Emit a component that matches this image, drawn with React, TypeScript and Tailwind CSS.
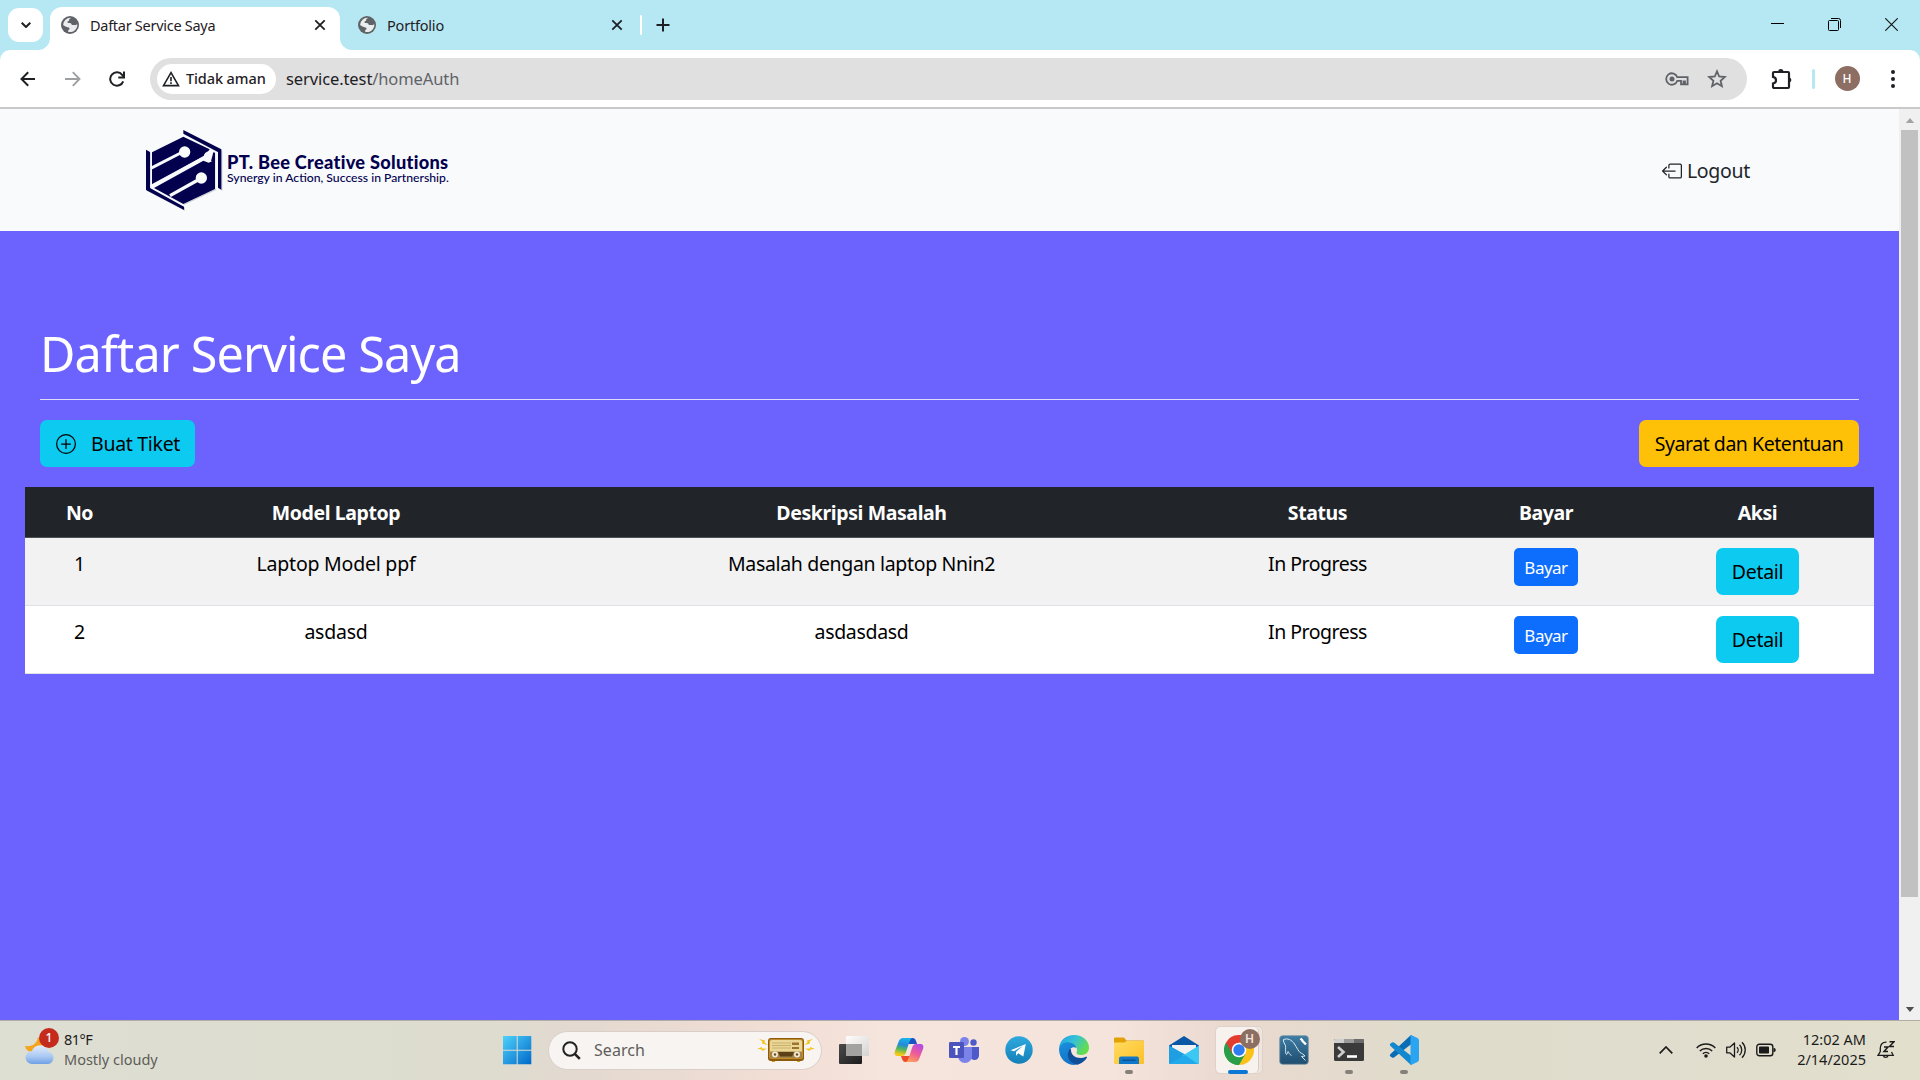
import React from "react";

const Globe = () => (
  <svg viewBox="0 0 18 18" className="h-[18px] w-[18px] shrink-0">
    <circle cx="9" cy="9" r="9" fill="#5f6368" />
    <path d="M10.2 1.9c-1 .5-2.3 1.1-2.1 2 .2.9-.6 1.300-1.500 1.500-.5.9.2 1.600 1.300 1.600 1.300 0 2.300.2 2.600 1.200.3.900 1 1 1.900.8.9-.2 1.700-.2 2.500.3.600-.9 1.200-1.600 1.400-.8a7.200 7.200 0 0 1-9.200 7.300c-.1-.8.100-1.700 1-2.200.8-.5.500-1.700-.4-2-1.500-.4-3.500-.9-5.600-2.500A7.200 7.200 0 0 1 10.200 1.900z" fill="#fff" fillOpacity=".88" />
  </svg>
);

const TabClose = () => (
  <svg viewBox="0 0 12 12" className="h-3 w-3 shrink-0" stroke="#1f2024" strokeWidth="1.800" fill="none">
    <path d="M1.300 1.300l9.400 9.400M10.700 1.300l-9.400 9.400" />
  </svg>
);

function TabStrip() {
  return (
    <div className="flex h-[50px] items-start bg-[#b5e8f3]">
      <div className="ml-2 mt-2 flex h-[34px] w-[35px] items-center justify-center rounded-[11px] bg-white">
        <svg viewBox="0 0 10 6" className="h-[6px] w-[10px]" fill="none" stroke="#1f2024" strokeWidth="2">
          <path d="M.7.700L5 5 9.300.700" />
        </svg>
      </div>
      <div className="mt-[7px] flex h-[43px] items-end">
        <svg viewBox="0 0 12 12" className="ml-[-5px] h-3 w-3" fill="#fff">
          <path d="M12 0v12H0A12 12 0 0 0 12 0z" />
        </svg>
        <div className="flex h-full w-[290px] items-center rounded-t-[12px] bg-white pb-[7px] pl-[11px] pr-[14px]">
          <Globe />
          <span className="ml-[11px] flex-1 text-[14.5px] leading-5 tracking-[-0.28px] text-[#1f2024]">Daftar Service Saya</span>
          <TabClose />
        </div>
        <svg viewBox="0 0 12 12" className="h-3 w-3" fill="#fff">
          <path d="M0 0v12h12A12 12 0 0 1 0 0z" />
        </svg>
      </div>
      <div className="mt-[7px] flex h-[36px] w-[288px] items-center pl-[6px] pr-[17px]">
        <Globe />
        <span className="ml-[11px] flex-1 text-[14.5px] leading-5 tracking-[-0.2px] text-[#1f2024]">Portfolio</span>
        <TabClose />
      </div>
      <div className="mt-[15px] h-[20px] w-[2px] rounded bg-white" />
      <svg viewBox="0 0 14 14" className="ml-[14px] mt-[18px] h-[14px] w-[14px]" stroke="#1f2024" strokeWidth="2">
        <path d="M7 .5v13M.5 7h13" />
      </svg>
      <div className="ml-auto mr-[22px] mt-[18px] flex h-[13px] w-[127px] items-center justify-between">
        <svg viewBox="0 0 13 13" className="h-[13px] w-[13px]"><path d="M0 5.500h13" stroke="#000" /></svg>
        <svg viewBox="0 0 13 13" className="mr-px h-[13px] w-[13px]" fill="none" stroke="#000">
          <rect x=".5" y="2.500" width="10" height="10" rx="1" />
          <path d="M3 .5h7.500a2 2 0 0 1 2 2v7.500" />
        </svg>
        <svg viewBox="0 0 13 13" className="h-[13px] w-[13px]" stroke="#111" strokeWidth="1.100"><path d="M.3.300l12.400 12.400M12.700.300L.3 12.700" /></svg>
      </div>
    </div>
  );
}

function Toolbar() {
  return (
    <div className="bg-[#b5e8f3]">
      <div className="flex h-[57px] items-center rounded-t-[10px] bg-white pl-5">
        <svg viewBox="0 0 16 16" className="h-4 w-4" fill="none" stroke="#1f2024" strokeWidth="2"><path d="M15 8H2M8.200 1.200L1.500 8l6.700 6.800" /></svg>
        <svg viewBox="0 0 16 16" className="ml-[29px] h-4 w-4" fill="none" stroke="#9d9fa1" strokeWidth="1.900"><path d="M0 8h14M7.800 1.200L14.500 8l-6.700 6.800" /></svg>
        <svg viewBox="0 0 16 16" className="ml-[28px] h-4 w-4" fill="none" stroke="#1f2024" strokeWidth="2">
          <path d="M14.200 10.300A6.700 6.700 0 1 1 13.200 3.900L14.800 5.800" />
          <path d="M15 .5v6H9.300" />
        </svg>
        <div className="ml-[25px] flex h-[42px] w-[1597px] items-center rounded-full bg-[#e0e0e0] pl-[7px] pr-5">
          <div className="flex h-[30px] w-[119px] items-center rounded-full bg-white pl-[5px]">
            <svg viewBox="0 0 18 16" className="h-4 w-[18px]" fill="none" stroke="#1f2024" strokeWidth="1.600">
              <path d="M9 1.700L1.500 14.600h15z" />
              <path d="M9 6v4.200M9 11.200v1.800" />
            </svg>
            <span className="ml-[6px] whitespace-nowrap pb-[2px] text-[14.5px] font-medium leading-5 tracking-[-0.1px] text-[#1f2024]">Tidak aman</span>
          </div>
          <span className="ml-[10px] flex-1 pt-[1px] text-[16.5px] leading-6 tracking-[-0.1px] text-[#5f6368]"><span className="text-[#1f2024]">service.test</span>/homeAuth</span>
          <svg viewBox="0 0 24 14" className="h-[14px] w-6" fill="none" stroke="#5f6368" strokeWidth="1.800">
            <path d="M12.300 5.200A5.700 5.700 0 1 0 12.300 8.800H16V12.300H18.500V9.500H20V12.300H22.600V5.200z" />
            <circle cx="7" cy="7" r="2.500" fill="#5f6368" stroke="none" />
          </svg>
          <svg viewBox="0 0 20 20" className="ml-[18px] h-5 w-5" fill="none" stroke="#5f6368" strokeWidth="1.800">
            <path d="M10 2.300l2.200 5.200 5.600.5-4.200 3.700 1.300 5.500L10 14.300l-4.900 2.900 1.300-5.500L2.200 8l5.600-.5z" />
          </svg>
        </div>
        <svg viewBox="0 0 22 22" className="ml-6 h-[22px] w-[22px]" fill="none" stroke="#1f2024" strokeWidth="2.200">
          <path d="M2 5.200Q2 4 3.200 4H17Q18 4 18 5V19Q18 20 17 20H3.200Q2 20 2 18.800V15.500Q5 15 5 12.200T2 8.900z" />
          <path d="M7.200 3.500a2.600 2.600 0 0 1 5.200 0zM18.500 9.500a2.600 2.600 0 0 1 0 5z" fill="#1f2024" stroke="none" />
        </svg>
        <div className="ml-[19px] h-5 w-[2.5px] rounded bg-[#b5e8f3]" />
        <div className="ml-[20px] flex h-[25px] w-[25px] items-center justify-center rounded-full bg-[#8d6e63] text-[12px] font-medium text-white">H</div>
        <svg viewBox="0 0 4 18" className="ml-[31px] h-[18px] w-1" fill="#1f2024"><circle cx="2" cy="2" r="2" /><circle cx="2" cy="9" r="2" /><circle cx="2" cy="16" r="2" /></svg>
      </div>
    </div>
  );
}

function Logo() {
  return (
    <div className="flex items-center text-[#03004e]">
      <svg viewBox="42 28 240 246" className="h-[82px] w-20">
        <g fill="#c9cbd2" transform="translate(3 3)">
          <path d="M48 91l11 6v108l103 56v9L48 211zM160 32l114 58v120l-10-6V97L160 41z" />
          <path d="M160 51l95 47v110l-95 44-94-46V98z" />
        </g>
        <path d="M160 51l97 47v110l-97 46-96-46V98z" fill="#f8fafc" />
        <g fill="#03004e">
          <path d="M48 90l12 7v108l102 56v10L48 211zM160 31l114 58v121l-10-6V97L160 42z" />
          <path d="M160 51l79 38-12 17-161 91V98z" />
          <path d="M72 205L220 123l16 6 19-8v87l-95 45z" />
        </g>
        <g stroke="#f8fafc" fill="#f8fafc">
          <path d="M62 146L152 100" strokeWidth="9" />
          <circle cx="164" cy="97" r="17" stroke="none" />
          <path d="M62 201L232 109" strokeWidth="10" />
          <circle cx="237" cy="111" r="16" stroke="none" />
          <path d="M120 228L204 181" strokeWidth="10" />
          <circle cx="214" cy="175" r="17" stroke="none" />
        </g>
        <path d="M250 98l5 1v30l-12-4z" fill="#03004e" />
      </svg>
      <div className="ml-[3px] flex flex-col whitespace-nowrap font-['Lato',sans-serif]">
        <span className="text-[18.200px] font-black leading-[17px] tracking-[0.28px]">PT. Bee Creative Solutions</span>
        <span className="text-[12.200px] font-medium leading-[13px]">Synergy in Action, Success in Partnership.</span>
        <span className="h-[2px]" />
      </div>
    </div>
  );
}

function Nav() {
  return (
    <div className="flex h-[122px] items-center justify-between bg-[#f8fafc] pl-36 pr-[149px]">
      <Logo />
      <div className="flex items-center pt-[2px] text-[19.5px] leading-[30px] tracking-[-0.3px] text-[#212529]">
        <svg viewBox="0 0 16 16" className="mr-[5px] h-5 w-5" fill="#212529">
          <path fillRule="evenodd" d="M6 12.500a.5.500 0 0 0 .5.500h8a.5.500 0 0 0 .5-.5v-9a.5.500 0 0 0-.5-.5h-8a.5.500 0 0 0-.5.500v2a.5.500 0 0 1-1 0v-2A1.500 1.500 0 0 1 6.500 2h8A1.500 1.500 0 0 1 16 3.500v9a1.500 1.500 0 0 1-1.500 1.500h-8A1.500 1.500 0 0 1 5 12.500v-2a.5.500 0 0 1 1 0z" />
          <path fillRule="evenodd" d="M.146 8.354a.5.500 0 0 1 0-.708l3-3a.5.500 0 1 1 .708.708L1.707 7.500H10.500a.5.500 0 0 1 0 1H1.707l2.147 2.146a.5.500 0 0 1-.708.708z" />
        </svg>
        Logout
      </div>
    </div>
  );
}

const rows = [
  { no: "1", model: "Laptop Model ppf", desc: "Masalah dengan laptop Nnin2", status: "In Progress" },
  { no: "2", model: "asdasd", desc: "asdasdasd", status: "In Progress" },
];

function ServiceTable() {
  return (
    <div className="ml-[25px] mt-5 w-[1849px] text-center text-[19.5px] leading-[30px] tracking-[-0.33px] text-black">
      <div className="grid h-[51px] grid-cols-[109px_404px_647px_265px_192px_231px] border-b border-[#4d5154] bg-[#212529] pt-[11px] font-bold tracking-[-0.4px] text-white">
        <div>No</div><div>Model Laptop</div><div>Deskripsi Masalah</div><div>Status</div><div>Bayar</div><div>Aksi</div>
      </div>
      {rows.map((r) => (
        <div key={r.no} className="grid h-[68px] grid-cols-[109px_404px_647px_265px_192px_231px] border-b border-[#dee2e6] pt-[11px] odd:bg-white even:bg-[#f2f2f2]">
          <div>{r.no}</div>
          <div className="tracking-[-0.22px]">{r.model}</div>
          <div>{r.desc}</div>
          <div className="tracking-[-0.5px]">{r.status}</div>
          <div className="flex justify-center"><button className="mt-[-1px] h-[38px] w-16 rounded-[5px] bg-[#0d6efd] pt-[1px] text-[17px] tracking-[-0.5px] text-white">Bayar</button></div>
          <div className="flex justify-center"><button className="mt-[-1px] h-[47px] w-[83px] rounded-[7px] bg-[#0dcaf0] pt-[1px]">Detail</button></div>
        </div>
      ))}
    </div>
  );
}

function Page() {
  return (
    <div className="flex h-[911px]">
      <div className="flex flex-1 flex-col">
        <Nav />
        <main className="flex-1 bg-[#6c63ff] pt-[92px]">
          <div className="mx-10">
            <h1 className="h-[77px] border-b border-[#dddcfb] text-[48.5px] leading-[60px] tracking-[-0.85px] text-white">Daftar Service Saya</h1>
            <div className="mt-[20px] flex h-[47px] justify-between text-[19.5px] leading-[30px] tracking-[-0.45px] text-black">
              <button className="flex w-[155px] items-center rounded-[7px] bg-[#0dcaf0] pl-4">
                <svg viewBox="0 0 16 16" className="mr-[15px] h-5 w-5">
                  <path d="M8 15A7 7 0 1 1 8 1a7 7 0 0 1 0 14m0 1A8 8 0 1 0 8 0a8 8 0 0 0 0 16" />
                  <path d="M8 4a.5.500 0 0 1 .5.500v3h3a.5.500 0 0 1 0 1h-3v3a.5.500 0 0 1-1 0v-3h-3a.5.500 0 0 1 0-1h3v-3A.5.500 0 0 1 8 4" />
                </svg>
                <span className="tracking-[-0.3px]">Buat Tiket</span>
              </button>
              <button className="w-[220px] rounded-[7px] bg-[#ffc107]">Syarat dan Ketentuan</button>
            </div>
          </div>
          <ServiceTable />
        </main>
      </div>
      <div className="flex w-[21px] flex-col items-center bg-[#f0f0f0] py-[9px]">
        <svg viewBox="0 0 10 6" className="h-[5px] w-[10px]" fill="#a3a3a3"><path d="M5 0l5 6H0z" /></svg>
        <div className="mt-[7px] h-[767px] w-[17px] bg-[#c1c1c1]" />
        <svg viewBox="0 0 10 6" className="mb-[-1px] mt-auto h-[5px] w-[10px]" fill="#505050"><path d="M0 0h10L5 6z" /></svg>
      </div>
    </div>
  );
}

const TaskView = () => (
  <svg viewBox="0 0 30 30" className="h-[30px] w-[30px]">
    <defs>
      <linearGradient id="tv1" x2="1" y2="1"><stop stopColor="#4a4a4a" /><stop offset="1" stopColor="#1c1c1c" /></linearGradient>
      <linearGradient id="tv2" x2="1" y2="1"><stop stopColor="#fff" /><stop offset="1" stopColor="#d2d2d0" /></linearGradient>
    </defs>
    <rect x="0" y="9" width="23" height="20" rx="1" fill="url(#tv1)" />
    <rect x="7" y="1" width="23" height="20" rx="1" fill="url(#tv2)" fillOpacity=".92" />
    <path d="M7 9h16v12H7z" fill="#a2a2a0" />
  </svg>
);

const Copilot = () => (
  <svg viewBox="0 0 30 28" className="h-7 w-[30px]">
    <defs>
      <linearGradient id="cp1" x1=".4" x2=".2" y2="1"><stop stopColor="#18b2ea" /><stop offset=".35" stopColor="#2489d8" /><stop offset=".6" stopColor="#52b65c" /><stop offset=".9" stopColor="#f5c816" /></linearGradient>
      <linearGradient id="cp2" x1=".8" x2=".3" y2="1"><stop stopColor="#b04be8" /><stop offset=".5" stopColor="#ee5a9a" /><stop offset="1" stopColor="#fba05a" /></linearGradient>
    </defs>
    <path d="M15 2h4c2 0 3 2 4 6h-9z" fill="#1d50c4" />
    <path d="M7 20h10l-3 6h-3c-2 0-3-3-4-6z" fill="#ec4b2c" />
    <path d="M9 2h10c-2 0-3 2-4 5l-3 9c-1 3-2 4-4 4H4c-3 0-4-2-3-5L4.500 6C5.500 3 7 2 9 2z" fill="url(#cp1)" />
    <path d="M21 26H11c2 0 3-2 4-5l3-9c1-3 2-4 4-4h4c3 0 4 2 3 5l-3.500 9c-1 3-2.500 4-4.500 4z" fill="url(#cp2)" />
  </svg>
);

const Teams = () => (
  <svg viewBox="0 0 30 28" className="h-7 w-[30px]">
    <circle cx="15.500" cy="5.500" r="4.500" fill="#7b83eb" />
    <circle cx="24.500" cy="6.500" r="3.200" fill="#5059c9" />
    <path d="M21 11h9v8.500a4.500 4.500 0 0 1-9 0z" fill="#5059c9" />
    <path d="M9 11h14v9a7 7 0 0 1-14 0z" fill="#7b83eb" />
    <rect y="6" width="15" height="16" rx="1.200" fill="#4b53bc" />
    <path d="M4 10h7v2H8.600v7H6.400v-7H4z" fill="#fff" />
  </svg>
);

const Telegram = () => (
  <svg viewBox="0 0 28 28" className="h-7 w-7">
    <defs><linearGradient id="tg" y2="1" x2="0"><stop stopColor="#2fa9de" /><stop offset="1" stopColor="#1580b8" /></linearGradient></defs>
    <circle cx="14" cy="14" r="13.700" fill="url(#tg)" />
    <path d="M5.500 14.200L20.800 8l-2.500 12.600-5-3.300-2.300 2.500.1-4 7-6-9 5.400z" fill="#fff" />
  </svg>
);

const Edge = () => (
  <svg viewBox="0 0 30 30" className="h-[30px] w-[30px]">
    <defs>
      <linearGradient id="ed1" x2="1" y2=".5"><stop stopColor="#1d9fe0" /><stop offset=".5" stopColor="#35c1d8" /><stop offset="1" stopColor="#62dd4c" /></linearGradient>
      <linearGradient id="ed2" x2=".3" y2="1"><stop stopColor="#1b8fdc" /><stop offset="1" stopColor="#1274c8" /></linearGradient>
    </defs>
    <path d="M0 13C1 5 7 0 15 0c9 0 15 6 15 12.500 0 5-3.500 7.500-8 7.500-3 0-5-1-4.500-2.500.8-1.500 1-4-1-6C12 8 4 8 0 13z" fill="url(#ed1)" />
    <path d="M0 14c1-5 6-7.500 10.500-6.500 4 .8 6.500 3 7 5.500-3-2-8 0-8 6 0 5 4 9.500 8 10.800C8 31 0 24 0 14z" fill="url(#ed2)" />
    <path d="M11 13.500C6 20 10 28 17.500 29.800c5-.8 8.500-4 10.500-7.300.300-.8-.5-1-1-.7C20 25 11.500 21.500 12 14.500z" fill="#0f4f9a" />
  </svg>
);

const Explorer = () => (
  <svg viewBox="0 0 30 27" className="h-[27px] w-[30px]">
    <defs><linearGradient id="ex" x2="1" y2="1"><stop stopColor="#ffdb63" /><stop offset="1" stopColor="#fdbf24" /></linearGradient></defs>
    <path d="M0 1.500Q0 .5 1 .5h9l2.500 3H29q1 0 1 1V10H0z" fill="#e2a106" />
    <path d="M0 5.500h10.500l2-1.500H29q1 0 1 1v21q0 1-1 1H1q-1 0-1-1z" fill="url(#ex)" />
    <path d="M5 27v-5.500Q5 19.500 7 19.500h16q2 0 2 2V27z" fill="#1178c9" />
    <path d="M8.500 23.200h13" stroke="#0a4f8c" strokeWidth="1.300" />
  </svg>
);

const Mail = () => (
  <svg viewBox="0 0 30 28" className="h-7 w-[30px]">
    <path d="M0 9.500L15 0l15 9.500v4H0z" fill="#0a57a6" />
    <path d="M3 9h24v9L15 21 3 18z" fill="#f1f1f1" />
    <path d="M0 9.500L17 19l13 9H1q-1 0-1-1z" fill="#1f9fe2" />
    <path d="M30 9.500L13 20l13 8h3q1 0 1-1z" fill="#3cc8f4" />
    <path d="M0 28l16-9 13 9z" fill="#22a9ea" />
  </svg>
);

const Chrome = () => (
  <div className="relative flex h-12 w-12 items-center rounded-[5px] border border-[#dfd2ca] bg-[#efe5df]">
    <div className="flex h-[46px] w-[43px] items-center justify-center rounded-[5px] border-r border-[#d9ccc4] bg-[#f8f2ef] pl-[5px]">
      <svg viewBox="0 0 30 30" className="h-[30px] w-[30px]">
        <path d="M15 15L2 7.500A15 15 0 0 1 28 7.500z" fill="#e33b2e" />
        <path d="M15 15L2 7.500A15 15 0 0 0 15 30l6.500-11.300z" fill="#2a9d48" />
        <path d="M15 7.500h13A15 15 0 0 1 15 30l6.500-11.300z" fill="#fbc116" />
        <path d="M2 7.500L8.500 18.700 15 15V7.500z" fill="#e33b2e" />
        <path d="M8.500 18.700L15 22.500l6.500-3.800L15 30C7 30 2 24 1 19z" fill="#2a9d48" />
        <circle cx="15" cy="15" r="7.300" fill="#fff" />
        <circle cx="15" cy="15" r="5.700" fill="#2d7cf0" />
      </svg>
    </div>
    <div className="absolute right-[2px] top-[2px] flex h-5 w-5 items-center justify-center rounded-full bg-[#8d6e63] text-[12px] font-semibold text-[#f1e3dd]">H</div>
  </div>
);

const Workbench = () => (
  <svg viewBox="0 0 30 30" className="h-[30px] w-[30px]">
    <defs><linearGradient id="wb" x2="0" y2="1"><stop stopColor="#3e7da6" /><stop offset="1" stopColor="#1f4d6e" /></linearGradient></defs>
    <rect x=".7" y=".7" width="28.600" height="28.600" rx="3" fill="url(#wb)" stroke="#7a93a3" strokeWidth=".8" />
    <path d="M4.500 4.500c4-1.500 8 0 11 4.500 2.500 4 4 7 5.500 8.500 2 1 4 2 5 3.500l-3.500.5 4 4M4.500 4.500c-.5 2 1 4 2 6 .5 3-.5 5 .5 8.500 1 1.500 1.500-1 2-2.500 1 1.500 1.500 3 3.500 4" fill="none" stroke="#dbe8f0" strokeWidth="1" />
    <path d="M21.500 3.500l2 2M23 5.500l4 4" stroke="#fff" strokeWidth="2.400" />
  </svg>
);

const Terminal = () => (
  <svg viewBox="0 0 30 22" className="h-[22px] w-[30px]">
    <rect width="30" height="22" rx="1.500" fill="#3a3a3a" />
    <path d="M1 0h9v4H0V1z" fill="#cfcfcf" /><path d="M10 0h10v4H10z" fill="#9b9b9b" /><path d="M20 0h9l1 1v3H20z" fill="#6b6b6b" />
    <path d="M4 8l5.500 5L4 18" fill="none" stroke="#cfcfcf" strokeWidth="2.600" />
    <path d="M13 17.500h10" stroke="#fff" strokeWidth="2.600" />
  </svg>
);

const VsCode = () => (
  <svg viewBox="0 0 30 30" className="h-[30px] w-[30px]">
    <path d="M22 0L1.500 19q-1.500 1.500 0 2.500l1.500 1q1 .7 2 0L23 8.500z" fill="#0a6cb4" />
    <path d="M22 30L1.500 11q-1.500-1.500 0-2.500l1.500-1q1-.7 2 0L23 21.500z" fill="#1388cf" />
    <path d="M22 0l6.500 3q1.500.8 1.500 2.500v19q0 1.700-1.500 2.500L22 30z" fill="#2ba5f1" />
    <path d="M22 0v30" stroke="#2ba5f1" strokeWidth="1" />
  </svg>
);

const apps: { icon: React.ReactNode; mark?: "open" | "active" }[] = [
  { icon: <TaskView /> }, { icon: <Copilot /> }, { icon: <Teams /> }, { icon: <Telegram /> }, { icon: <Edge /> },
  { icon: <Explorer />, mark: "open" }, { icon: <Mail /> }, { icon: <Chrome />, mark: "active" }, { icon: <Workbench /> },
  { icon: <Terminal />, mark: "open" }, { icon: <VsCode />, mark: "open" },
];

const Radio = () => (
  <svg viewBox="0 0 58 26" className="h-[26px] w-[58px]">
    <g fill="#f2c317">
      <path d="M2 2l6 1.500-.5 2L11 8 5 6.500l.5-2zM0 12l5-2v1.500l5 .3-5 2.200V12.500zM56 2l-6 1.500.5 2L47 8l6-1.500-.5-2zM58 12l-5-2v1.500l-5 .3 5 2.200V12.500z" />
    </g>
    <path d="M14 22h4v3h-3zM40 22h4l-1 3h-3z" fill="#d99a20" />
    <rect x="11" y="1" width="36" height="23" rx="3" fill="#8c5a0c" />
    <rect x="12" y="2" width="34" height="20" rx="2" fill="#c08d2c" />
    <rect x="13" y="3" width="32" height="18" rx="2" fill="#ead798" />
    <path d="M15 6h19M15 8.500h19M15 11h19" stroke="#c9b06a" />
    <path d="M35 5.500h7v2.500h-7zM35 10h7v2h-7z" fill="#9b7430" />
    <rect x="13" y="14.500" width="32" height="6.500" fill="#a58348" />
    <path d="M21 15h16l-2 4.500H23z" fill="#5c4018" />
    <circle cx="18" cy="17.500" r="3" fill="#f2ead2" /><circle cx="40" cy="17.500" r="3" fill="#f2ead2" />
    <circle cx="18" cy="17.500" r="1.200" fill="#6b4c1e" /><circle cx="40" cy="17.500" r="1.200" fill="#6b4c1e" />
  </svg>
);

function Taskbar() {
  return (
    <div className="flex h-[60px] items-center border-t border-[#b3ada5] bg-[linear-gradient(90deg,#dddfd2_0%,#dddccf_25%,#e3d9d0_30%,#f2ded5_41%,#f5e5dd_46%,#f4e4dc_58%,#ead9cf_64%,#dfdccc_74%,#e0ddce_86%,#e2dfcd_100%)] pb-px">
      <div className="flex w-[502px] items-center pb-[2px] pl-[25px]">
        <div className="relative h-[40px] w-[39px]">
          <svg viewBox="0 0 30 28" className="mt-[8px] h-7 w-[30px]">
            <defs><linearGradient id="cl" x2="0" y2="1"><stop stopColor="#e2edfc" /><stop offset=".6" stopColor="#a9c8f2" /><stop offset="1" stopColor="#6f9fe4" /></linearGradient></defs>
            <path d="M13 0c-1 6-5 10-13 9 1 5 6 7 10 5l9-8z" fill="#f3a51f" />
            <path d="M7 27a6.500 6.500 0 0 1 0-13c1.500-4 4.500-5.500 8-5.500 4.500 0 7 2.500 8 6a6.300 6.300 0 0 1 0 12.500z" fill="url(#cl)" />
          </svg>
          <div className="absolute left-[14px] top-[-1px] flex h-5 w-5 items-center justify-center rounded-full bg-[#c42b1c] text-[12px] font-medium text-white">1</div>
        </div>
        <div className="flex flex-col text-[14.5px] leading-5">
          <span className="tracking-[-0.5px] text-[#1b1b1b]">81°F</span>
          <span className="text-[#5d5c58]">Mostly cloudy</span>
        </div>
      </div>
      <svg viewBox="0 0 30 30" className="h-[30px] w-[30px]">
        <defs><linearGradient id="win" x2="1" y2="1"><stop stopColor="#4fd2fb" /><stop offset="1" stopColor="#0068c9" /></linearGradient></defs>
        <path d="M1 1h13.700v13.700H1zM15.700 1h13.600v13.700H15.700zM1 15.700h13.700v13.600H1zM15.700 15.700h13.600v13.600H15.700z" fill="url(#win)" />
      </svg>
      <div className="ml-[16px] flex h-[39px] w-[274px] items-center rounded-full border border-[#d9cfc8] bg-[#f7f4f1] pl-[13px] pr-[6px]">
        <svg viewBox="0 0 19 19" className="h-[19px] w-[19px]" fill="none" stroke="#222"><circle cx="8" cy="8" r="6.700" strokeWidth="2" /><path d="M12.800 12.800l5 5" strokeWidth="2.600" /></svg>
        <span className="ml-[13px] flex-1 text-[16px] leading-5 tracking-[0.05px] text-[#5f5e5b]">Search</span>
        <Radio />
      </div>
      <div className="ml-[4px] flex h-full">
        {apps.map((a, i) => (
          <div key={i} className="relative flex h-full w-[55px] items-center justify-center">
            {a.icon}
            {a.mark === "open" && <div className="absolute bottom-[5px] left-[23.500px] h-1 w-2 rounded-full bg-[#86807b]" />}
            {a.mark === "active" && <div className="absolute bottom-[5px] left-[17px] h-1 w-5 rounded-full bg-[#0a78d4]" />}
          </div>
        ))}
      </div>
      <div className="ml-auto flex items-center pr-[25px]">
        <svg viewBox="0 0 14 8" className="h-2 w-[14px]" fill="none" stroke="#1b1b1b" strokeWidth="1.700"><path d="M.7 7.300L7 1l6.300 6.300" /></svg>
        <svg viewBox="0 0 20 16" className="ml-[23px] h-4 w-5" fill="none" stroke="#1b1b1b" strokeWidth="1.500">
          <path d="M.7 6a13 13 0 0 1 18.600 0M3.800 9a8.800 8.800 0 0 1 12.400 0M6.800 11.800a4.600 4.600 0 0 1 6.400 0" />
          <circle cx="10" cy="14" r="1.800" fill="#1b1b1b" stroke="none" />
        </svg>
        <svg viewBox="0 0 20 18" className="ml-[10px] h-[18px] w-5" fill="none" stroke="#1b1b1b" strokeWidth="1.300">
          <path d="M.7 6.200h3.100L8.500 2v14L3.800 11.800H.7z" strokeLinejoin="round" />
          <path d="M11 6.200a4 4 0 0 1 0 5.600M13.500 3.700a7.400 7.400 0 0 1 0 10.600M16 1.300a10.800 10.800 0 0 1 0 15.400" />
        </svg>
        <svg viewBox="0 0 20 14" className="ml-[10px] h-[14px] w-5"><rect x=".8" y="1.300" width="16" height="11.400" rx="2.500" fill="none" stroke="#1b1b1b" strokeWidth="1.400" /><rect x="3" y="3.500" width="10" height="7" rx=".8" fill="#1b1b1b" /><path d="M17.500 4.700q2.300.5 2.300 2.300t-2.300 2.300z" fill="#1b1b1b" /></svg>
        <div className="ml-[20px] flex w-[70px] flex-col items-end whitespace-nowrap pb-[3px] text-[14.5px] leading-5 text-[#1b1b1b]"><span>12:02 AM</span><span>2/14/2025</span></div>
        <svg viewBox="0 0 18 18" className="ml-[11px] h-[18px] w-[18px]" fill="none" stroke="#1b1b1b" strokeWidth="1.300">
          <path d="M9.500 1.200C5.500 1 3.300 3.800 3.300 7v3.500L1 14.300h15.200L14.500 11M6.300 14.500a2.500 2.500 0 0 0 4.800 0" />
          <path d="M7 6h4L7 10.500h4M12.500.8H17L12.500 5.500H17" strokeWidth="1.500" />
        </svg>
      </div>
    </div>
  );
}

export default function App() {
  return (
    <div className="h-[1080px] w-[1920px] overflow-hidden bg-white font-['Noto_Sans',sans-serif]">
      <TabStrip />
      <Toolbar />
      <div className="h-[2px] bg-[#c9c9c9]" />
      <Page />
      <Taskbar />
    </div>
  );
}
